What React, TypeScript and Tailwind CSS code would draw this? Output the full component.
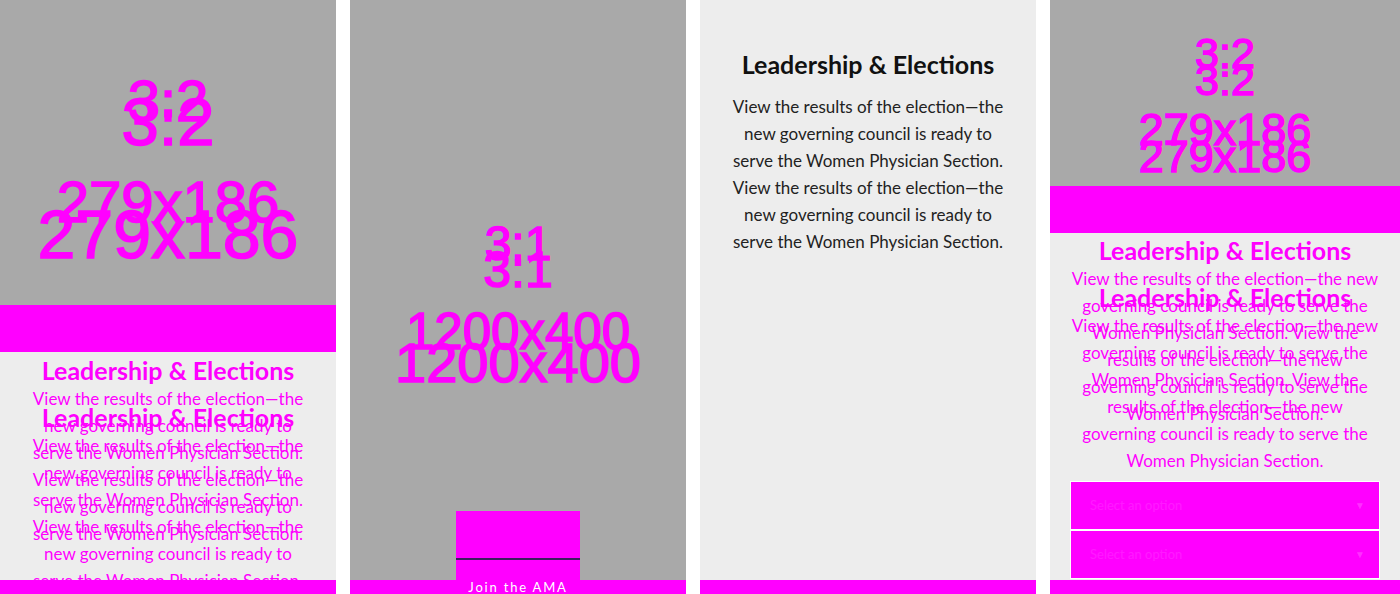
import React from "react";

const M = "#ff00ff";

const linesNarrow = [
  "View the results of the election\u2014the",
  "new governing council is ready to",
  "serve the Women Physician Section.",
  "View the results of the election\u2014the",
  "new governing council is ready to",
  "serve the Women Physician Section.",
];

const linesWide = [
  "View the results of the election\u2014the new",
  "governing council is ready to serve the",
  "Women Physician Section. View the",
  "results of the election\u2014the new",
  "governing council is ready to serve the",
  "Women Physician Section.",
];

function TextBlock({
  lines,
  color,
  headColor,
  gap,
}: {
  lines: string[];
  color: string;
  headColor: string;
  gap: string;
}) {
  return (
    <div className="flex flex-col items-center" style={{ color }}>
      <h2
        className="text-[25px] leading-[28px] font-bold whitespace-nowrap"
        style={{ color: headColor }}
      >
        Leadership &amp; Elections
      </h2>
      <p className={`${gap} text-[17px] leading-[27px] text-center`}>
        {lines.map((l, i) => (
          <span key={i} className="block whitespace-nowrap">
            {l}
          </span>
        ))}
      </p>
    </div>
  );
}

type T = { t: string; size: number; y: number };

function Placeholder({ w, h, items }: { w: number; h: number; items: T[] }) {
  return (
    <svg width={w} height={h} className="block">
      {items.map((it, i) => (
        <text
          key={i}
          x={w / 2}
          y={it.y}
          textAnchor="middle"
          fill={M}
          stroke={M}
          strokeWidth={1.6}
          fontFamily="'Liberation Sans', Arial, sans-serif"
          fontSize={it.size}
        >
          {it.t}
        </text>
      ))}
    </svg>
  );
}

export default function App() {
  return (
    <div
      className="flex w-[1400px] h-[594px] bg-white gap-[14px] overflow-hidden"
      style={{ fontFamily: "Lato, 'Noto Sans', sans-serif" }}
    >
      {/* Column 1 */}
      <div className="relative flex flex-col w-[336px] h-[594px] overflow-hidden">
        <div className="h-[305px] bg-[#a9a9a9]">
          <Placeholder
            w={336}
            h={305}
            items={[
              { t: "3:2", size: 58, y: 121 },
              { t: "3:2", size: 67, y: 145 },
              { t: "279x186", size: 58, y: 222 },
              { t: "279x186", size: 68, y: 258 },
            ]}
          />
        </div>
        <div className="h-[47px] bg-[#ff00ff]" />
        <div className="relative flex-1 bg-[#ededed] pt-[4px] overflow-hidden">
          <TextBlock lines={linesNarrow} color={M} headColor={M} gap="mt-[0.5px]" />
          <div className="absolute left-0 right-0 top-[51px]">
            <TextBlock lines={linesNarrow} color={M} headColor={M} gap="mt-[0.5px]" />
          </div>
        </div>
        <div className="h-[14px] bg-[#ff00ff]" />
      </div>

      {/* Column 2 */}
      <div className="relative flex flex-col w-[336px] h-[594px] overflow-hidden">
        <div className="flex-1 bg-[#a9a9a9]">
          <Placeholder
            w={336}
            h={580}
            items={[
              { t: "3:1", size: 48, y: 260 },
              { t: "3:1", size: 50, y: 287 },
              { t: "1200x400", size: 51, y: 349 },
              { t: "1200x400", size: 56, y: 382 },
            ]}
          />
        </div>
        <div className="h-[14px] bg-[#ff00ff]" />
        <div className="absolute left-[106px] top-[511px] w-[124px] h-[83px] bg-[#ff00ff] flex flex-col items-center">
          <div className="mt-[47px] w-full h-[2px] bg-[#3b1d5e]" />
          <span className="mt-[21px] text-[13px] leading-[13px] tracking-[1.8px] text-white whitespace-nowrap">
            Join the AMA
          </span>
        </div>
      </div>

      {/* Column 3 */}
      <div className="relative flex flex-col w-[336px] h-[594px] overflow-hidden">
        <div className="flex-1 bg-[#ededed] pt-[50px]">
          <TextBlock lines={linesNarrow} color="#222222" headColor="#111111" gap="mt-[14.5px]" />
        </div>
        <div className="h-[14px] bg-[#ff00ff]" />
      </div>

      {/* Column 4 */}
      <div className="relative flex flex-col w-[350px] h-[594px] overflow-hidden">
        <div className="h-[186px] bg-[#a9a9a9]">
          <Placeholder
            w={350}
            h={186}
            items={[
              { t: "3:2", size: 43, y: 68 },
              { t: "3:2", size: 43, y: 95 },
              { t: "279x186", size: 45, y: 145 },
              { t: "279x186", size: 45, y: 172 },
            ]}
          />
        </div>
        <div className="h-[47px] bg-[#ff00ff]" />
        <div className="relative flex-1 bg-[#ededed] pt-[3px] px-[21px] flex flex-col">
          <TextBlock lines={linesWide} color={M} headColor={M} gap="mt-[0.5px]" />
          <div className="absolute left-0 right-0 top-[50px]">
            <TextBlock lines={linesWide} color={M} headColor={M} gap="mt-[0.5px]" />
          </div>
          <div className="mt-auto flex flex-col gap-[2px] mb-[2px]">
            {[0, 1].map((i) => (
              <div
                key={i}
                className="h-[47px] bg-[#ff00ff] flex items-center justify-between pl-[19px] pr-[14px] ring-1 ring-white"
              >
                <span className="text-[13px] text-white/10">Select an option</span>
                <span className="text-[10px] text-white/20">&#9660;</span>
              </div>
            ))}
          </div>
        </div>
        <div className="h-[14px] bg-[#ff00ff]" />
      </div>
    </div>
  );
}
